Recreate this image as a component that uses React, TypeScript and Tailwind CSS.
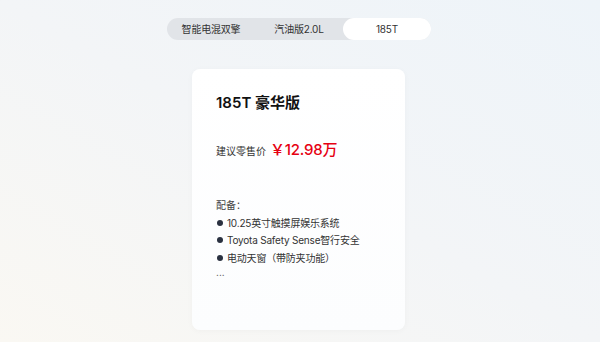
import React, {useState} from 'react';

const tabs = ['智能电混双擎', '汽油版2.0L', '185T'];
const features = ['10.25英寸触摸屏娱乐系统', 'Toyota Safety Sense智行安全', '电动天窗（带防夹功能）'];

const font = { fontFamily: 'Inter, "Noto Sans CJK SC", sans-serif' };

export default function App() {
  const [active, setActive] = useState( 2 );

  return (
    <div
      className="w-[600px] h-[342px] overflow-hidden bg-gradient-to-tr from-[#faf8f3] via-[#f3f5f7] to-[#eef4f9] flex flex-col items-center"
      style={font}
    >
      <div className="mt-[18px] ml-[-2px] w-[264px] h-[22px] rounded-full bg-[#e1e4e8] flex">
        {tabs.map( ( tab, i ) => (
          <button
            key={tab}
            onClick={() => setActive( i )}
            className={`flex-1 rounded-full text-[10px] leading-none text-[#333] tracking-[-0.2px] ${active === i ? 'bg-white' : ''}`}
          >
            {tab}
          </button>
        ) )}
      </div>

      <div className="mt-[29px] ml-[-3px] w-[213px] h-[261px] rounded-lg bg-gradient-to-b from-white to-[#fcfdfe] shadow-[0_1px_6px_rgba(0,0,0,0.03)] pl-6 pr-4 pt-[25px]">
        <h2 className="text-[15px] leading-[18px] font-semibold text-[#111]">185T 豪华版</h2>

        <div className="mt-[27px] flex items-center gap-[4px]">
          <span className="text-[10px] mt-[2px] text-[#333]">建议零售价</span>
          <span className="text-[15px] font-medium text-[#e60012] tracking-[-0.2px]">￥12.98万</span>
        </div>

        <p className="mt-[36px] text-[10px] leading-[14px] text-[#444]">配备：</p>
        <ul className="mt-[4px] flex flex-col gap-[3.5px]">
          {features.map( ( f ) => (
            <li key={f} className="flex items-center gap-[4px] text-[10px] leading-[14px] text-[#333] tracking-[-0.2px]">
              <span className="ml-[1px] w-[6px] h-[6px] rounded-full bg-[#2a3140] shrink-0" />
              {f}
            </li>
          ) )}
        </ul>
        <p className="mt-[1px] text-[10px] leading-[12px] text-[#555]">...</p>
      </div>
    </div>
  );
}
